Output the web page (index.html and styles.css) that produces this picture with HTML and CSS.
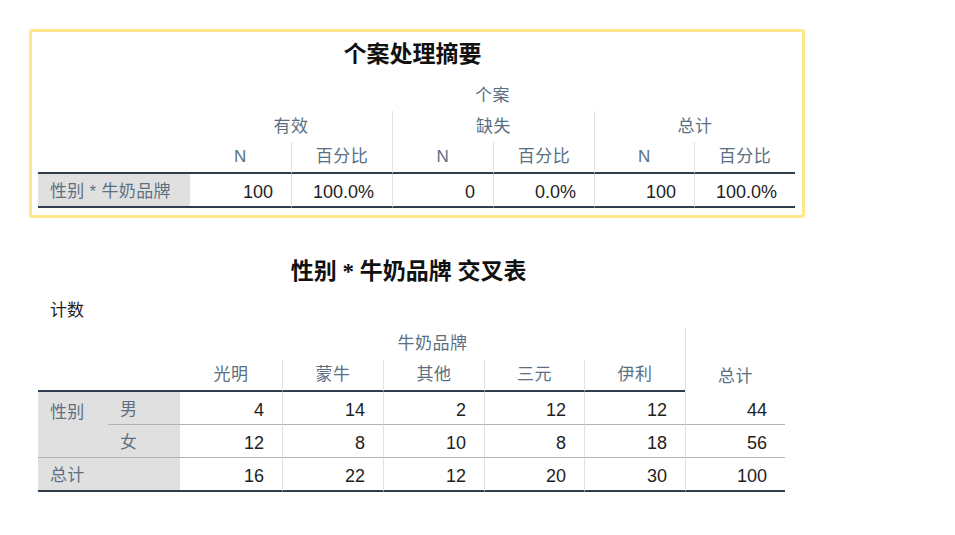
FILE: index.html
```html
<!DOCTYPE html>
<html lang="zh-CN">
<head>
<meta charset="utf-8">
<title>个案处理摘要</title>
<link rel="stylesheet" href="styles.css">
</head>
<body>
<div class="page">
  <section class="box">
    <h1 class="title">个案处理摘要</h1>
    <table class="grid t1">
      <colgroup>
        <col class="c-rh1">
        <col class="c-d"><col class="c-d"><col class="c-d"><col class="c-d"><col class="c-d100"><col class="c-d">
      </colgroup>
      <thead>
        <tr class="r31">
          <th class="corner" rowspan="3"></th>
          <th class="hd" colspan="6">个案</th>
        </tr>
        <tr class="r31">
          <th class="hd" colspan="2">有效</th>
          <th class="hd vl" colspan="2">缺失</th>
          <th class="hd vl" colspan="2">总计</th>
        </tr>
        <tr class="r32 thick">
          <th class="hd">N</th>
          <th class="hd vl">百分比</th>
          <th class="hd vl">N</th>
          <th class="hd vl">百分比</th>
          <th class="hd vl">N</th>
          <th class="hd vl">百分比</th>
        </tr>
      </thead>
      <tbody>
        <tr class="r34 thick">
          <th class="rh">性别 * 牛奶品牌</th>
          <td class="num">100</td>
          <td class="num vl">100.0%</td>
          <td class="num vl">0</td>
          <td class="num vl">0.0%</td>
          <td class="num vl">100</td>
          <td class="num vl">100.0%</td>
        </tr>
      </tbody>
    </table>
  </section>

  <section class="cross">
    <h2 class="title2">性别 * 牛奶品牌 交叉表</h2>
    <div class="caption">计数</div>
    <table class="grid t2">
      <colgroup>
        <col class="c-a"><col class="c-b">
        <col class="c-102"><col class="c-d"><col class="c-d"><col class="c-d100"><col class="c-d"><col class="c-d100">
      </colgroup>
      <thead>
        <tr class="r32">
          <th class="corner" colspan="2" rowspan="2"></th>
          <th class="hd" colspan="5">牛奶品牌</th>
          <th class="hd vl bottom" rowspan="2">总计</th>
        </tr>
        <tr class="r32 thick">
          <th class="hd">光明</th>
          <th class="hd vl">蒙牛</th>
          <th class="hd vl">其他</th>
          <th class="hd vl">三元</th>
          <th class="hd vl">伊利</th>
        </tr>
      </thead>
      <tbody>
        <tr class="r33 thin">
          <th class="rh top thinb" rowspan="2">性别</th>
          <th class="rh">男</th>
          <td class="num">4</td>
          <td class="num vl">14</td>
          <td class="num vl">2</td>
          <td class="num vl">12</td>
          <td class="num vl">12</td>
          <td class="num vl">44</td>
        </tr>
        <tr class="r33 thin">
          <th class="rh">女</th>
          <td class="num">12</td>
          <td class="num vl">8</td>
          <td class="num vl">10</td>
          <td class="num vl">8</td>
          <td class="num vl">18</td>
          <td class="num vl">56</td>
        </tr>
        <tr class="r34 thick">
          <th class="rh" colspan="2">总计</th>
          <td class="num">16</td>
          <td class="num vl">22</td>
          <td class="num vl">12</td>
          <td class="num vl">20</td>
          <td class="num vl">30</td>
          <td class="num vl">100</td>
        </tr>
      </tbody>
    </table>
  </section>
</div>
</body>
</html>
```

FILE: styles.css
```css
html, body {
  margin: 0;
  padding: 0;
  background: #ffffff;
}

body {
  font-family: "Liberation Sans", "Noto Sans CJK SC", sans-serif;
  color: #222222;
}

.page {
  padding: 29px 0 0 29px;
}

.box {
  width: 776px;
  border: 3px solid #ffe88c;
  border-radius: 3px;
  padding: 0 7px 7px 6px;
  box-sizing: border-box;
}

.title {
  margin: 0;
  padding: 8px 8px 0 0;
  height: 48px;
  box-sizing: border-box;
  line-height: 30px;
  font-size: 23px;
  font-weight: 700;
  text-align: center;
  color: #111111;
  font-family: "Liberation Serif", "Noto Sans CJK SC", serif;
}

.grid {
  border-collapse: separate;
  border-spacing: 0;
  table-layout: fixed;
}

.t1 {
  width: 757px;
}

.t2 {
  width: 747px;
}

.c-rh1 { width: 152px; }
.c-d { width: 101px; }
.c-d100 { width: 100px; }
.c-102 { width: 102px; }
.c-a { width: 70px; }
.c-b { width: 72px; }

.grid th,
.grid td {
  padding: 0;
  line-height: 20px;
  vertical-align: middle;
  white-space: nowrap;
  overflow: hidden;
}

.r31 { height: 31px; }
.r32 { height: 32px; }
.r33 { height: 33px; }
.r34 { height: 34px; }

.hd {
  font-weight: 400;
  font-size: 17px;
  color: #5a7082;
  text-align: center;
  letter-spacing: 0.5px;
}

.bottom {
  vertical-align: bottom !important;
  padding-bottom: 5px !important;
}

.vl {
  border-left: 1px solid #e2e2e2;
}

.thick > th,
.thick > td,
.corner {
  border-bottom: 2px solid #2e3e4c;
}

.thin > th,
.thin > td,
.thinb {
  border-bottom: 1px solid #b3b3b3;
}

.rh {
  background: #e0e0e0;
  font-weight: 400;
  font-size: 17px;
  color: #5d7080;
  text-align: left;
  padding-left: 12px !important;
  padding-top: 3px !important;
  letter-spacing: 0.3px;
}

.rh.top {
  vertical-align: top;
  padding-top: 11px !important;
}

.num {
  font-size: 18px;
  color: #1e1e1e;
  text-align: right;
  padding-right: 18px !important;
  padding-top: 3px !important;
}

.cross {
  margin-left: 9px;
  width: 747px;
  margin-top: 39px;
}

.title2 {
  margin: 0;
  padding-right: 6px;
  height: 44px;
  line-height: 30px;
  font-size: 23px;
  font-weight: 700;
  text-align: center;
  color: #111111;
  font-family: "Liberation Serif", "Noto Sans CJK SC", serif;
}

.caption {
  font-size: 17px;
  line-height: 20px;
  padding-left: 12px;
  color: #222222;
  margin-bottom: 7px;
}
```
